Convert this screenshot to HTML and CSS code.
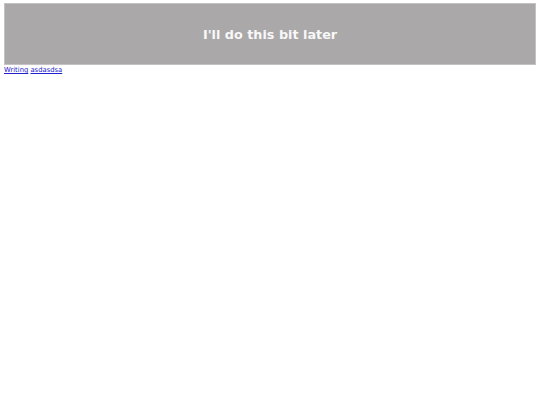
FILE: index.html
```html
<!DOCTYPE html>
<html>
<head>
<meta charset="utf-8">
<link rel="stylesheet" href="styles.css">
</head>
<body>
<div class="banner"><h1 class="banner-title">I'll do this bit later</h1></div>
<nav class="links"><a href="#">Writing</a> <a href="#">asdasdsa</a></nav>
</body>
</html>
```
FILE: styles.css
```css
html, body { margin: 0; padding: 0; background: #fff; }
body { padding: 3px 4px; font-family: "DejaVu Sans", Verdana, sans-serif; }
.banner {
  background: #aaa8a8;
  border: 1px solid #c4c2c2;
  height: 60px;
  display: flex;
  align-items: center;
  justify-content: center;
}
.banner-title {
  margin: 0;
  color: #f8f8f8;
  font-family: "DejaVu Sans", Verdana, sans-serif;
  font-size: 12.8px;
  font-weight: bold;
}
.links {
  font-family: "DejaVu Sans", Verdana, sans-serif;
  font-size: 6.8px;
  line-height: 10px;
}
.links a { color: #2222cc; }
```
